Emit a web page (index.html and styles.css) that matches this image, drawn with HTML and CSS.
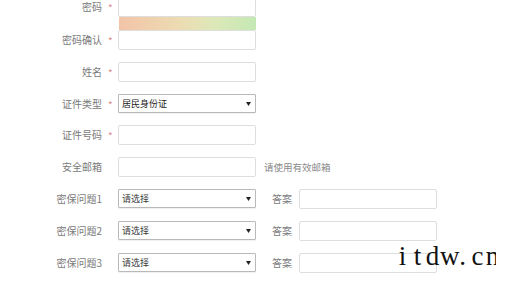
FILE: index.html
```html
<!DOCTYPE html>
<html lang="zh-CN">
<head>
<meta charset="utf-8">
<title>注册</title>
<link rel="stylesheet" href="styles.css">
</head>
<body>
<div class="form">
  <div class="row">
    <span class="lbl">密码</span><span class="req">*</span>
    <div class="box"></div>
  </div>
  <div class="strength"></div>
  <div class="row">
    <span class="lbl">密码确认</span><span class="req">*</span>
    <div class="box"></div>
  </div>
  <div class="row spaced">
    <span class="lbl">姓名</span><span class="req">*</span>
    <div class="box"></div>
  </div>
  <div class="row spaced">
    <span class="lbl">证件类型</span><span class="req">*</span>
    <div class="box select"><span class="val strong">居民身份证</span><svg class="arrow" width="5" height="4" viewBox="0 0 5 4"><path d="M0 0H5L2.5 4Z" fill="#222"/></svg></div>
  </div>
  <div class="row spaced">
    <span class="lbl">证件号码</span><span class="req">*</span>
    <div class="box"></div>
  </div>
  <div class="row spaced">
    <span class="lbl">安全邮箱</span><span class="req"></span>
    <div class="box"></div>
    <span class="hint">请使用有效邮箱</span>
  </div>
  <div class="row spaced">
    <span class="lbl">密保问题1</span><span class="req"></span>
    <div class="box select"><span class="val">请选择</span><svg class="arrow" width="5" height="4" viewBox="0 0 5 4"><path d="M0 0H5L2.5 4Z" fill="#222"/></svg></div>
    <span class="ans">答案</span>
    <div class="box"></div>
  </div>
  <div class="row spaced">
    <span class="lbl">密保问题2</span><span class="req"></span>
    <div class="box select"><span class="val">请选择</span><svg class="arrow" width="5" height="4" viewBox="0 0 5 4"><path d="M0 0H5L2.5 4Z" fill="#222"/></svg></div>
    <span class="ans">答案</span>
    <div class="box"></div>
  </div>
  <div class="row spaced">
    <span class="lbl">密保问题3</span><span class="req"></span>
    <div class="box select"><span class="val">请选择</span><svg class="arrow" width="5" height="4" viewBox="0 0 5 4"><path d="M0 0H5L2.5 4Z" fill="#222"/></svg></div>
    <span class="ans">答案</span>
    <div class="box"></div>
  </div>
</div>
<div class="mark"><span class="ch">i</span><span class="ch">t</span><span class="ch">d</span><span class="ch">w</span><span class="ch">.</span><span class="ch">c</span><span class="ch">n</span></div>
</body>
</html>
```

FILE: styles.css
```css
html, body {
  margin: 0;
  padding: 0;
  background: #fff;
  overflow: hidden;
}
body {
  width: 520px;
  height: 282px;
  position: relative;
  font-family: "Noto Sans CJK SC", "Noto Sans", sans-serif;
}
.form {
  display: flex;
  flex-direction: column;
  margin-top: -3px;
}
.row {
  display: flex;
  align-items: center;
  height: 20px;
}
.row.spaced {
  margin-top: 11.8px;
}
.lbl {
  width: 102px;
  text-align: right;
  font-size: 10px;
  color: #7a7a7a;
  line-height: 20px;
}
.req {
  width: 16px;
  box-sizing: border-box;
  padding-left: 6px;
  font-size: 10px;
  color: #dc8c8c;
  line-height: 20px;
  padding-top: 2px;
}
.box {
  width: 138px;
  height: 20px;
  box-sizing: border-box;
  border: 1px solid #dedede;
  border-radius: 2px;
  background: #fff;
  flex: none;
}
.select {
  display: flex;
  align-items: center;
  justify-content: space-between;
  height: 19px;
  border-color: #b9b9b9;
  border-radius: 1px;
  box-shadow: 0 1px 1px rgba(0,0,0,0.06);
  padding: 0 4px 0 3px;
}
.val {
  font-size: 9px;
  color: #3a3a3a;
  line-height: 17px;
}
.val.strong {
  color: #222;
}
.arrow {
  display: block;
}
.strength {
  margin-left: 119px;
  width: 137px;
  height: 13px;
  background: linear-gradient(to right, #f3c4a8 0%, #ecdcb2 45%, #dde8b8 70%, #c4e8b4 100%);
}
.hint {
  margin-left: 8px;
  font-size: 9.5px;
  color: #8a8a8a;
}
.ans {
  margin-left: 16px;
  width: 27px;
  font-size: 10px;
  color: #7a7a7a;
}
.mark {
  position: absolute;
  left: 395px;
  top: 238px;
  width: 101px;
  height: 36px;
  overflow: hidden;
  white-space: nowrap;
  font-family: "Liberation Serif", serif;
  font-size: 27px;
  line-height: 36px;
  color: #111;
}
.ch {
  display: inline-block;
  width: 15px;
  text-align: center;
}
```
